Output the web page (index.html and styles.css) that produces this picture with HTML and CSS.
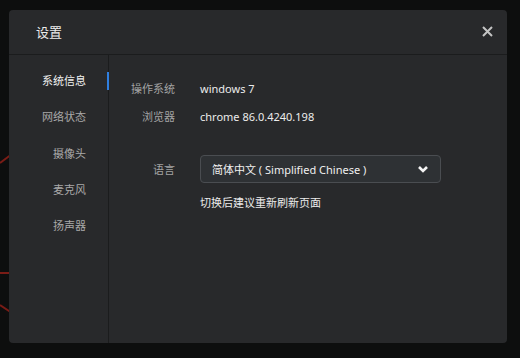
FILE: index.html
```html
<!DOCTYPE html>
<html lang="zh-CN">
<head>
  <meta charset="UTF-8" />
  <meta name="viewport" content="width=device-width, initial-scale=1.0"/>
  <title>设置</title>
  <link rel="stylesheet" href="styles.css">
</head>
<body>
  <!-- 背景里的线条 -->
  <svg class="backdrop" width="520" height="358" viewBox="0 0 520 358">
    <line x1="0" y1="163" x2="12" y2="154" />
    <line x1="0" y1="273" x2="12" y2="273" />
    <line x1="0" y1="305" x2="12" y2="313" />
  </svg>

  <div class="dialog">
    <div class="dialog-header">
      <h2>设置</h2>
      <span class="close-btn">
        <svg width="11" height="11" viewBox="0 0 11 11">
          <path d="M1 1 L10 10 M10 1 L1 10" />
        </svg>
      </span>
    </div>

    <div class="dialog-body">
      <ul class="side-menu">
        <li class="active">系统信息</li>
        <li>网络状态</li>
        <li>摄像头</li>
        <li>麦克风</li>
        <li>扬声器</li>
      </ul>

      <div class="panel">
        <div class="info-row">
          <span class="label">操作系统</span>
          <span class="value">windows 7</span>
        </div>
        <div class="info-row">
          <span class="label">浏览器</span>
          <span class="value">chrome 86.0.4240.198</span>
        </div>
        <div class="info-row lang-row">
          <span class="label">语言</span>
          <div class="select">
            <span>简体中文 ( Simplified Chinese )</span>
            <svg width="12" height="8" viewBox="0 0 12 8">
              <path d="M2 2 L6 6 L10 2" />
            </svg>
          </div>
        </div>
        <p class="hint">切换后建议重新刷新页面</p>
      </div>
    </div>
  </div>
</body>
</html>
```

FILE: styles.css
```css
* {
  box-sizing: border-box;
  margin: 0;
  padding: 0;
  font-family: "Noto Sans", "Noto Sans CJK SC", sans-serif;
}

body, html {
  height: 100%;
  width: 100%;
  overflow: hidden;
}

body {
  background: #0d0e0e;
  padding: 10px 0 0 9px;
  position: relative;
}

.backdrop {
  position: absolute;
  left: 0;
  top: 0;
}

.backdrop line {
  stroke: #7a1c16;
  stroke-width: 2;
}

.dialog {
  position: relative;
  width: 498px;
  height: 333px;
  background: #28292b;
  border-radius: 4px;
  display: flex;
  flex-direction: column;
}

.dialog-header {
  height: 45px;
  display: flex;
  align-items: center;
  justify-content: space-between;
  padding: 0 14px 0 27px;
  border-bottom: 1px solid #1b1c1d;
}

.dialog-header h2 {
  font-size: 13px;
  font-weight: normal;
  color: #ececec;
  margin-top: -1px;
}

.close-btn {
  display: flex;
  margin-top: -1px;
}

.close-btn path {
  stroke: #c4c4c4;
  stroke-width: 2;
  fill: none;
}

.dialog-body {
  flex: 1;
  display: flex;
}

.side-menu {
  list-style: none;
  width: 100px;
  border-right: 1px solid #1b1c1d;
  padding-top: 8px;
}

.side-menu li {
  position: relative;
  height: 36.3px;
  line-height: 36px;
  text-align: right;
  padding-right: 22px;
  font-size: 11px;
  color: #a8a8a8;
}

.side-menu li.active {
  color: #f2f2f2;
}

/* 选中项右侧的蓝条 */
.side-menu li.active::after {
  content: "";
  position: absolute;
  right: -1px;
  top: 9px;
  width: 2px;
  height: 18px;
  background: #2f7fe0;
}

.panel {
  flex: 1;
  padding-top: 19px;
}

.info-row {
  display: grid;
  grid-template-columns: 66px 1fr;
  column-gap: 25px;
  align-items: center;
  height: 28px;
  font-size: 11px;
}

.label {
  text-align: right;
  color: #a3a3a3;
}

.value {
  color: #ececec;
}

.lang-row {
  margin-top: 25px;
}

.select {
  width: 241px;
  height: 28px;
  border: 1px solid #4a4d51;
  border-radius: 4px;
  background: #2e3134;
  display: flex;
  align-items: center;
  justify-content: space-between;
  padding: 0 11px 0 11px;
  color: #f0f0f0;
}

.select path {
  stroke: #f4f4f4;
  stroke-width: 2.6;
  fill: none;
}

.hint {
  margin: 12px 0 0 91px;
  font-size: 11px;
  line-height: 16px;
  color: #ececec;
}
```
